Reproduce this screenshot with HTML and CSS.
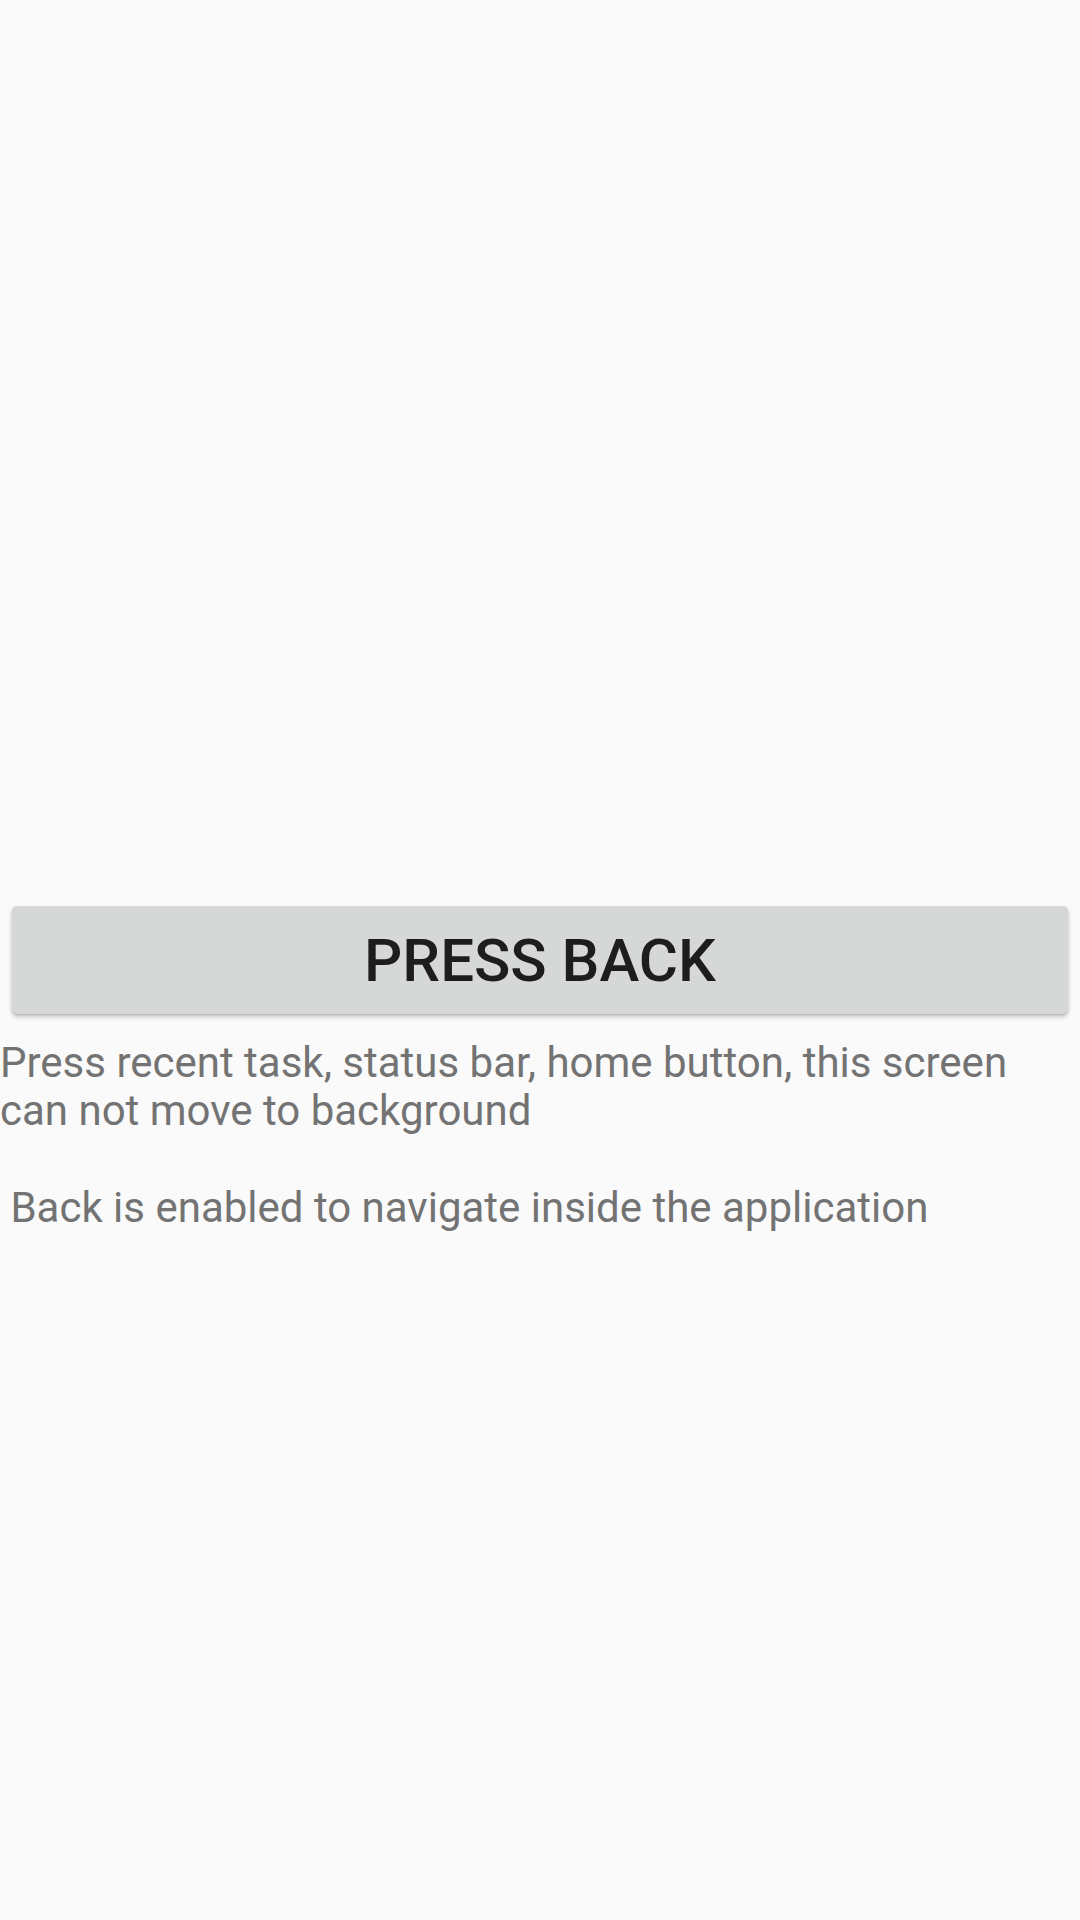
FILE: index.html
```html
<!DOCTYPE html>
<html>
<head>
<meta charset="utf-8">
<link rel="stylesheet" href="styles.css">
</head>
<body>
<main class="screen">
  <button class="press-back">PRESS BACK</button>
  <p class="info">Press recent task, status bar, home button, this screen can not move to background<br><br>&nbsp;Back is enabled to navigate inside the application</p>
</main>
</body>
</html>
```
FILE: styles.css
```css
html, body {
  margin: 0;
  padding: 0;
  background: #fafafa;
}
.screen {
  width: 1080px;
  height: 1920px;
  box-sizing: border-box;
  padding-top: 906px;
  display: flex;
  flex-direction: column;
}
.press-back {
  margin: 0 12px;
  height: 108px;
  border: none;
  border-radius: 5px;
  background: #d6d7d7;
  box-shadow: 0 3px 5px rgba(0,0,0,0.2), 0 1px 2px rgba(0,0,0,0.14);
  font-family: Roboto, "Liberation Sans", sans-serif;
  font-weight: 500;
  font-size: 60px;
  color: #1d1d1d;
  padding: 0;
  display: flex;
  align-items: center;
  justify-content: center;
}
.info {
  margin: 25px 0 0 0;
  padding: 0;
  font-family: Roboto, "Liberation Sans", sans-serif;
  font-size: 42px;
  line-height: 48.3px;
  color: #737373;
  width: 1030px;
}
```
